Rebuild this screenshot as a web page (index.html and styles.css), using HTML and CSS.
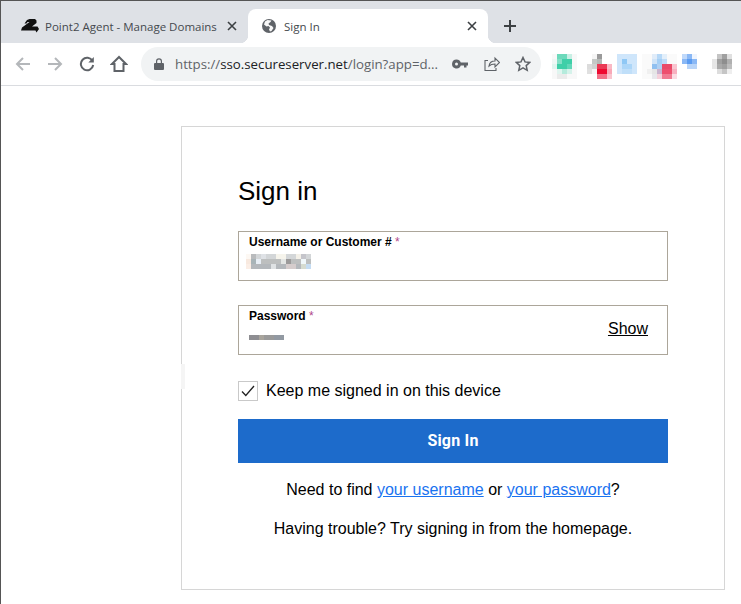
FILE: index.html
```html
<!DOCTYPE html>
<html lang="en">
<head>
    <meta charset="UTF-8">
    <title>Sign In</title>
    <link rel="stylesheet" href="styles.css">
</head>
<body>
    <div class="window">
        <!-- Tabs -->
        <div class="tabstrip">
            <div class="tab">
                <svg class="tab-icon" width="18" height="14" viewBox="0 0 18 14"><path fill="#111" d="M6 1 8.500 0H14l1.500 1.500V4L11 7.500h5.500L18 10l-2.500 3.500-1-2H0l1-3 7.500-5.500V3H6.500L5.500 4.500H3.500z"/></svg>
                <span class="tab-title">Point2 Agent - Manage Domains</span>
                <svg class="tab-close" width="10" height="10" viewBox="0 0 10 10"><path d="M1 1l8 8M9 1L1 9"/></svg>
            </div>
            <div class="tab tab-active">
                <svg class="tab-icon" width="16" height="16" viewBox="0 0 16 16"><circle cx="8" cy="8" r="7" fill="#5f6368"/><path fill="#fff" d="M6.500 2 4 3.500 3 6.500l2.500 2L7.500 8l1.500 1.500-1 2 1 2 1.500-.5 2-3-1.500-2-3-1-.5-1.500L9.500 4l1-1.500z" opacity=".95"/></svg>
                <span class="tab-title">Sign In</span>
                <svg class="tab-close" width="10" height="10" viewBox="0 0 10 10"><path d="M1 1l8 8M9 1L1 9"/></svg>
            </div>
            <svg class="new-tab" width="14" height="14" viewBox="0 0 14 14"><path d="M7 1v12M1 7h12"/></svg>
        </div>

        <!-- Toolbar -->
        <div class="toolbar">
            <svg class="tool tool-off" width="16" height="16" viewBox="0 0 16 16"><path d="M15 8H2M8 2 2 8l6 6"/></svg>
            <svg class="tool tool-off" width="16" height="16" viewBox="0 0 16 16"><path d="M1 8h13M8 2l6 6-6 6"/></svg>
            <svg class="tool tool-reload" width="16" height="16" viewBox="0 0 16 16"><path d="M13.500 5A6.200 6.200 0 1 0 14.200 9"/><path class="solid" d="M14.800 1v5.500H9.300z"/></svg>
            <svg class="tool" width="18" height="18" viewBox="0 0 18 18"><path d="M9 2 2 9h2.500v7h9V9H16z"/></svg>
            <div class="omnibox">
                <svg class="lock" width="10" height="12" viewBox="0 0 10 12"><path fill="#5f6368" d="M1 5h1V3.200a3 3 0 0 1 6 0V5h1a1 1 0 0 1 1 1v5a1 1 0 0 1-1 1H1a1 1 0 0 1-1-1V6a1 1 0 0 1 1-1zm2.200 0h3.600V3.200a1.800 1.800 0 0 0-3.600 0z"/></svg>
                <span class="url"><span class="url-dim">https://</span>sso.secureserver.net<span class="url-dim">/login?app=d...</span></span>
                <svg class="omni-icon" width="16" height="10" viewBox="0 0 16 10"><path fill="#5f6368" fill-rule="evenodd" d="M4.500 0.500A4.500 4.500 0 0 1 8.800 3.500H16v3h-1.500v2h-2.500v-2H8.800A4.500 4.500 0 1 1 4.500.5zm0 3a1.500 1.500 0 1 0 0 3 1.500 1.500 0 0 0 0-3z"/></svg>
                <svg class="omni-icon omni-line omni-share" width="16" height="16" viewBox="0 0 16 16"><path d="M5 10c.5-3.500 3-5 6-5V2l4.500 4.500L11 11V8c-2.500 0-4.500.5-6 2zM4 4.500H1v10h11V12"/></svg>
                <svg class="omni-icon omni-line" width="16" height="16" viewBox="0 0 16 16"><path d="M8 1.500l2 4.400 4.800.5-3.600 3.200 1 4.700L8 11.900l-4.200 2.400 1-4.700L1.200 6.400 6 5.900z"/></svg>
            </div>
            <svg class="extensions" width="185" height="25" viewBox="0 0 185 25" shape-rendering="crispEdges">
                <!-- first -->
                <rect width="25" height="25" fill="#f8f8f8"/>
                <rect x="5" y="0" width="10" height="5" fill="#6cd9bb"/><rect x="15" y="0" width="5" height="5" fill="#c8efe4"/>
                <rect x="0" y="5" width="5" height="5" fill="#eef7f4"/><rect x="5" y="5" width="5" height="5" fill="#84dfc6"/><rect x="10" y="5" width="10" height="5" fill="#3fcfa8"/>
                <rect x="0" y="10" width="5" height="5" fill="#dff5ef"/><rect x="5" y="10" width="10" height="5" fill="#3fcfa8"/><rect x="15" y="10" width="5" height="5" fill="#62d7b8"/>
                <rect x="5" y="15" width="5" height="5" fill="#e0f5ef"/><rect x="10" y="15" width="5" height="5" fill="#b5ebdc"/><rect x="15" y="15" width="5" height="5" fill="#d5f2ea"/>
                <rect x="5" y="20" width="10" height="5" fill="#ebebeb"/>
                <!-- second -->
                <rect x="40" y="0" width="5" height="5" fill="#f5f5f5"/><rect x="45" y="0" width="5" height="5" fill="#9a9a9a"/>
                <rect x="40" y="5" width="5" height="5" fill="#c5c9c7"/><rect x="45" y="5" width="5" height="5" fill="#b5b9b7"/>
                <rect x="35" y="10" width="5" height="5" fill="#dcdcdc"/><rect x="40" y="10" width="5" height="5" fill="#d0d2d1"/><rect x="45" y="10" width="10" height="5" fill="#ea3a55"/><rect x="55" y="10" width="5" height="5" fill="#f9b9c5"/>
                <rect x="35" y="15" width="5" height="5" fill="#e0e0e0"/><rect x="40" y="15" width="5" height="5" fill="#f5f5f5"/><rect x="45" y="15" width="10" height="5" fill="#ee0a30"/><rect x="55" y="15" width="5" height="5" fill="#f9a9b8"/>
                <rect x="45" y="20" width="10" height="5" fill="#f27188"/><rect x="55" y="20" width="5" height="5" fill="#f9c5cf"/>
                <!-- third -->
                <rect x="65" y="0" width="20" height="20" fill="#cfe6fb"/><rect x="70" y="5" width="5" height="5" fill="#8fc8f5"/><rect x="70" y="10" width="10" height="5" fill="#acd6f8"/><rect x="70" y="15" width="10" height="5" fill="#c0dff9"/>
                <!-- fourth -->
                <rect x="90" y="0" width="35" height="25" fill="#fafafa"/>
                <rect x="100" y="0" width="5" height="5" fill="#e0ecf9"/><rect x="105" y="0" width="5" height="5" fill="#b6d8f7"/><rect x="110" y="0" width="5" height="5" fill="#e3effa"/>
                <rect x="100" y="5" width="5" height="5" fill="#d0e4f8"/><rect x="105" y="5" width="5" height="5" fill="#a5cff5"/><rect x="110" y="5" width="5" height="5" fill="#bfdcf8"/>
                <rect x="100" y="10" width="5" height="5" fill="#90c0f0"/><rect x="105" y="10" width="5" height="5" fill="#b0d0f2"/><rect x="110" y="10" width="10" height="5" fill="#e94a68"/><rect x="120" y="10" width="5" height="5" fill="#f9c5d0"/>
                <rect x="95" y="15" width="5" height="5" fill="#f0f0f0"/><rect x="100" y="15" width="5" height="5" fill="#e5e5e5"/><rect x="105" y="15" width="5" height="5" fill="#c9b3cf"/><rect x="110" y="15" width="10" height="5" fill="#ee4f6e"/><rect x="120" y="15" width="5" height="5" fill="#f8b0c0"/>
                <rect x="100" y="20" width="5" height="5" fill="#e8e8ec"/><rect x="105" y="20" width="5" height="5" fill="#f5d0da"/><rect x="110" y="20" width="10" height="5" fill="#f17a92"/><rect x="120" y="20" width="5" height="5" fill="#fbdce3"/>
                <!-- fifth -->
                <rect x="130" y="0" width="5" height="5" fill="#c0d9fa"/><rect x="135" y="0" width="5" height="5" fill="#8ab8f5"/><rect x="140" y="0" width="5" height="5" fill="#eef4fd"/>
                <rect x="130" y="5" width="5" height="5" fill="#8ab8f5"/><rect x="135" y="5" width="5" height="5" fill="#5b9cf2"/><rect x="140" y="5" width="5" height="5" fill="#8ab8f5"/>
                <rect x="135" y="10" width="10" height="5" fill="#b8d4f8"/>
                <!-- sixth -->
                <rect x="165" y="0" width="5" height="5" fill="#c5c5c5"/><rect x="170" y="0" width="5" height="5" fill="#a0a0a0"/><rect x="175" y="0" width="5" height="5" fill="#e0e0e0"/>
                <rect x="160" y="5" width="5" height="5" fill="#e6e6e6"/><rect x="165" y="5" width="5" height="5" fill="#a0a0a0"/><rect x="170" y="5" width="5" height="5" fill="#8e8e8e"/><rect x="175" y="5" width="5" height="5" fill="#b0b0b0"/>
                <rect x="160" y="10" width="5" height="5" fill="#e6e6e6"/><rect x="165" y="10" width="5" height="5" fill="#aaaaaa"/><rect x="170" y="10" width="5" height="5" fill="#a0a0a0"/><rect x="175" y="10" width="5" height="5" fill="#bdbdbd"/>
                <rect x="165" y="15" width="5" height="5" fill="#dddddd"/><rect x="170" y="15" width="5" height="5" fill="#c5c5c5"/><rect x="175" y="15" width="5" height="5" fill="#eeeeee"/>
            </svg>
        </div>

        <!-- Page -->
        <div class="page">
            <div class="card">
                <h1>Sign in</h1>
                <div class="field">
                    <label>Username or Customer # <span class="req">*</span></label>
                    <svg class="blur-name" width="65" height="15" viewBox="0 0 65 15" shape-rendering="crispEdges">
                        <rect x="5" y="0" width="60" height="5" fill="#d3d6d8"/><rect x="0" y="0" width="5" height="5" fill="#fdf8f3"/><rect x="5" y="0" width="5" height="5" fill="#b9bbbd"/><rect x="15" y="0" width="5" height="5" fill="#dfe2e6"/><rect x="30" y="0" width="10" height="5" fill="#f6f4ec"/><rect x="50" y="0" width="5" height="5" fill="#f3f0e8"/><rect x="55" y="0" width="5" height="5" fill="#c5c5cb"/>
                        <rect x="0" y="5" width="65" height="5" fill="#bdbfbf"/><rect x="0" y="5" width="5" height="5" fill="#f8e9df"/><rect x="5" y="5" width="5" height="5" fill="#a8b4b8"/><rect x="10" y="5" width="5" height="5" fill="#e8eef5"/><rect x="35" y="5" width="5" height="5" fill="#e4e6e4"/><rect x="40" y="5" width="5" height="5" fill="#9c9a9a"/><rect x="55" y="5" width="5" height="5" fill="#f0f7fa"/>
                        <rect x="0" y="10" width="65" height="5" fill="#b4b8bc"/><rect x="0" y="10" width="5" height="5" fill="#fbeee6"/><rect x="25" y="10" width="5" height="5" fill="#dfe2e4"/><rect x="40" y="10" width="10" height="5" fill="#d5cccc"/><rect x="55" y="10" width="5" height="5" fill="#d6dbd0"/><rect x="60" y="10" width="5" height="5" fill="#c5dcf2"/>
                    </svg>
                </div>
                <div class="field">
                    <label>Password <span class="req">*</span></label>
                    <svg class="blur-pass" width="35" height="5" viewBox="0 0 35 5" shape-rendering="crispEdges">
                        <rect width="10" height="5" fill="#8e8e92"/><rect x="10" width="5" height="5" fill="#a8a49c"/><rect x="15" width="10" height="5" fill="#9a9a9a"/><rect x="25" width="10" height="5" fill="#9299a2"/>
                    </svg>
                    <a class="show" href="#">Show</a>
                </div>
                <div class="keep">
                    <span class="checkbox"><svg width="14" height="12" viewBox="0 0 14 12"><path d="M1 6.500l3.800 4L13 1"/></svg></span>
                    <span>Keep me signed in on this device</span>
                </div>
                <button type="button">Sign In</button>
                <p class="help help-find">Need to find <a href="#">your username</a> or <a href="#">your password</a>?</p>
                <p class="help">Having trouble? Try signing in from the homepage.</p>
            </div>
        </div>
    </div>
</body>
</html>
```

FILE: styles.css
```css
/* styles.css */
html, body {
margin: 0;
height: 100%;
overflow: hidden;
background-color: white;
}

.window {
height: 604px;
box-sizing: border-box;
border-top: 1px solid #555;
border-left: 1px solid #555;
font-family: "Liberation Sans", Arial, sans-serif;
}

.tabstrip {
height: 42px;
background-color: #dee1e6;
display: flex;
align-items: flex-end;
padding-left: 7px;
}

.tab {
width: 240px;
height: 34px;
box-sizing: border-box;
display: flex;
align-items: center;
padding: 0 11px 0 12px;
color: #45494e;
position: relative;
}

.tab-active {
background-color: white;
border-radius: 8px 8px 0 0;
}

.tab-active::before,
.tab-active::after {
content: "";
position: absolute;
bottom: 0;
width: 8px;
height: 8px;
}

.tab-active::before {
left: -8px;
background: radial-gradient(circle at 0 0, transparent 8px, white 8.5px);
}

.tab-active::after {
right: -8px;
background: radial-gradient(circle at 100% 0, transparent 8px, white 8.5px);
}

.tab-icon {
flex: none;
margin-right: 6px;
margin-left: 1px;
}

.tab-active .tab-icon {
margin-right: 7px;
}

.tab-title {
flex: 1;
font-family: "Open Sans", sans-serif;
font-size: 11.500px;
white-space: nowrap;
overflow: hidden;
}

.tab-close {
flex: none;
fill: none;
stroke: #3c4043;
stroke-width: 1.6;
}

.new-tab {
fill: none;
stroke: #3c4043;
stroke-width: 2;
margin: 0 0 10px 15px;
}

.toolbar {
height: 43px;
box-sizing: border-box;
border-bottom: 1px solid #dadce0;
display: flex;
align-items: center;
padding-left: 14px;
}

.tool {
flex: none;
fill: none;
stroke: #5f6368;
stroke-width: 2;
margin-right: 16px;
}

.tool-reload {
margin-right: 15px;
}

.tool .solid {
fill: #5f6368;
stroke: none;
}

.tool-off {
stroke: #b4b7ba;
}

.omnibox {
width: 400px;
height: 34px;
flex: none;
margin-left: -3px;
border-radius: 17px;
background-color: #f1f3f4;
display: flex;
align-items: center;
padding-left: 13px;
box-sizing: border-box;
}

.lock {
flex: none;
margin-right: 11px;
}

.url {
width: 277px;
flex: none;
font-family: "Open Sans", sans-serif;
font-size: 13.250px;
color: #202124;
white-space: nowrap;
}

.url-dim {
color: #5f6368;
}

.omni-icon {
flex: none;
margin-right: 16px;
}

.omni-line {
fill: none;
stroke: #5f6368;
stroke-width: 1.500;
}

.omni-share {
stroke-width: 1.100;
margin-right: 15px;
}

.extensions {
flex: none;
align-self: flex-start;
margin: 11px 0 0 11px;
}

.page {
padding: 40px 16px 0 180px;
}

.card {
width: 544px;
height: 464px;
box-sizing: border-box;
border: 1px solid #d6d6d6;
padding: 47px 56px 0;
position: relative;
color: #000;
}

.card::before {
content: "";
position: absolute;
left: -1px;
top: 237px;
width: 4px;
height: 25px;
background-color: #f5f5f5;
}

h1 {
font-size: 26px;
font-weight: normal;
line-height: 34px;
margin: 0 0 23px;
}

.field {
height: 50px;
box-sizing: border-box;
border: 1px solid #aca69a;
margin-bottom: 24px;
padding: 3px 10px;
position: relative;
}

.field label {
display: block;
font-size: 12px;
font-weight: bold;
line-height: 14px;
}

.req {
color: #b0478a;
font-weight: normal;
}

.blur-name {
display: block;
margin: 5px 0 0 -3px;
}

.blur-pass {
display: block;
margin-top: 12px;
}

.show {
position: absolute;
right: 19px;
top: 14px;
font-size: 16px;
line-height: 18px;
color: #000;
}

.keep {
display: flex;
align-items: center;
font-size: 16px;
margin: 26px 0 18px;
height: 20px;
}

.checkbox {
width: 20px;
height: 20px;
box-sizing: border-box;
border: 1px solid #c9c9c9;
margin-right: 8px;
display: flex;
align-items: center;
justify-content: center;
}

.checkbox svg {
fill: none;
stroke: #222;
stroke-width: 1.300;
}

button {
display: block;
width: 430px;
height: 44px;
border: none;
padding: 0 0 2px;
background-color: #1d6bcb;
color: white;
font-family: Roboto, sans-serif;
font-size: 16px;
font-weight: bold;
letter-spacing: .2px;
}

.help {
margin: 0;
font-size: 16px;
line-height: 18px;
text-align: center;
}

.help-find {
margin: 18px 0 21px;
}

.help a {
color: #1a73f0;
}
```
